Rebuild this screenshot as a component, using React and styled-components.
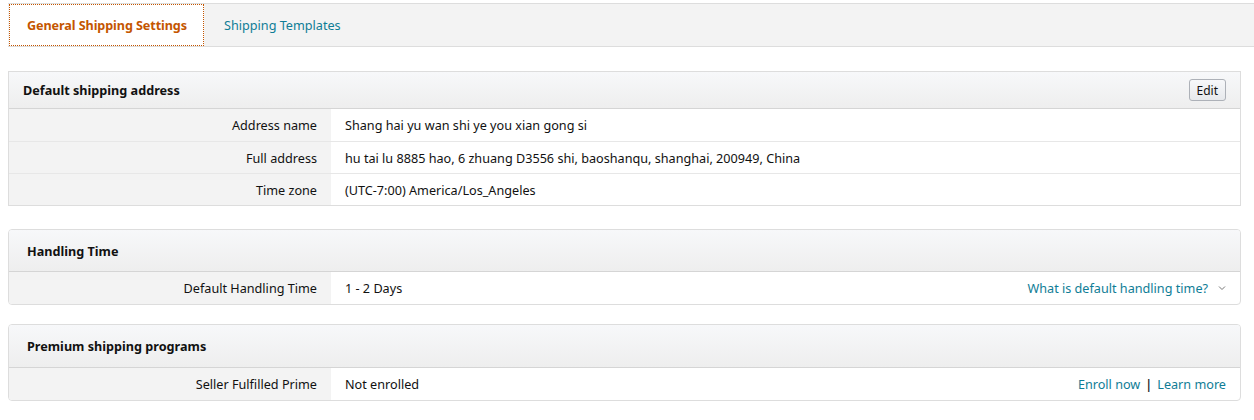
import React from "react";
import styled, { createGlobalStyle } from "styled-components";

const GlobalStyle = createGlobalStyle`
  body {
    margin: 0;
    padding: 3px 0 0 8px;
    background: #fff;
    font-family: "Noto Sans", "Open Sans", Arial, sans-serif;
    font-size: 12.65px;
    color: #111;
  }
`;

const Page = styled.div`
  display: flex;
  flex-direction: column;
`;

const TabBar = styled.nav`
  display: flex;
  height: 42px;
  background: #f3f3f3;
  border-top: 1px solid #ddd;
  border-bottom: 1px solid #ddd;
`;

const Tab = styled.a`
  display: flex;
  align-items: center;
  box-sizing: border-box;
  width: ${(p) => (p.$active ? "195px" : "auto")};
  padding: 0 20px 0 ${(p) => (p.$active ? "18px" : "20px")};
  font-size: 12.65px;
  font-weight: ${(p) => (p.$active ? 700 : 400)};
  letter-spacing: ${(p) => (p.$active ? "-0.1px" : "0")};
  white-space: nowrap;
  color: ${(p) => (p.$active ? "#c45500" : "#0f7d96")};
  background: ${(p) => (p.$active ? "#fff" : "transparent")};
  outline: ${(p) => (p.$active ? "1px dotted #c45500" : "none")};
  outline-offset: -1px;
  margin-left: ${(p) => (p.$active ? "1px" : "0")};
  cursor: pointer;
`;

const Panels = styled.div`
  display: flex;
  flex-direction: column;
  margin-top: 24px;
  width: 1233px;
`;

const Panel = styled.section`
  margin-top: ${(p) => p.$space || 0}px;
  border: 1px solid #ddd;
  border-radius: ${(p) => (p.$rounded ? "4px" : "0")};
  overflow: hidden;
  background: #fff;
`;

const PanelHeader = styled.header`
  display: flex;
  align-items: center;
  justify-content: space-between;
  height: ${(p) => p.$height}px;
  padding: 0 14px 0 ${(p) => p.$indent}px;
  background: linear-gradient(#f7f8fa, #eeeeee);
  border-bottom: 1px solid #d5d5d5;
  box-sizing: border-box;
`;

const PanelTitle = styled.h3`
  margin: 0;
  font-size: 12.65px;
  font-weight: 700;
  color: #111;
`;

const EditButton = styled.button`
  height: 22px;
  padding: 0 7px;
  font: inherit;
  font-size: 12px;
  color: #111;
  background: linear-gradient(#f7f8fa, #e7e9ec);
  border: 1px solid #adb1b8;
  border-radius: 3px;
  cursor: pointer;
`;

const Row = styled.div`
  display: grid;
  grid-template-columns: 322px 1fr;
  height: 32px;
  box-sizing: border-box;
  border-top: ${(p) => (p.$first ? "none" : "1px solid #e7e7e7")};
`;

const Label = styled.div`
  display: flex;
  align-items: center;
  justify-content: flex-end;
  padding-right: 14px;
  background: #f3f3f3;
  color: #111;
`;

const Value = styled.div`
  display: flex;
  align-items: center;
  justify-content: space-between;
  padding: 0 14px;
  color: #111;
`;

const Links = styled.div`
  display: flex;
  align-items: center;
  gap: 5px;
`;

const Link = styled.a`
  color: #0f7d96;
  cursor: pointer;
`;

const Divider = styled.span`
  color: #131a22;
  font-weight: 600;
`;

const Chevron = styled.svg`
  width: 8px;
  height: 6px;
  margin-left: 5px;
`;

const addressRows = [
  ["Address name", "Shang hai yu wan shi ye you xian gong si"],
  ["Full address", "hu tai lu 8885 hao, 6 zhuang D3556 shi, baoshanqu, shanghai, 200949, China"],
  ["Time zone", "(UTC-7:00) America/Los_Angeles"],
];

const App = () => {
  return (
    <Page>
      <GlobalStyle />
      <TabBar>
        <Tab $active>General Shipping Settings</Tab>
        <Tab>Shipping Templates</Tab>
      </TabBar>
      <Panels>
        <Panel>
          <PanelHeader $height={37} $indent={14}>
            <PanelTitle>Default shipping address</PanelTitle>
            <EditButton>Edit</EditButton>
          </PanelHeader>
          {addressRows.map(([label, value], i) => (
            <Row key={label} $first={i === 0}>
              <Label>{label}</Label>
              <Value>{value}</Value>
            </Row>
          ))}
        </Panel>
        <Panel $rounded $space={23}>
          <PanelHeader $height={42} $indent={18}>
            <PanelTitle>Handling Time</PanelTitle>
          </PanelHeader>
          <Row $first>
            <Label>Default Handling Time</Label>
            <Value>
              <span>1 - 2 Days</span>
              <Links>
                <Link>What is default handling time?</Link>
                <Chevron viewBox="0 0 8 6">
                  <path d="M1 1.5 L4 4.5 L7 1.5" fill="none" stroke="#777" strokeWidth="1" />
                </Chevron>
              </Links>
            </Value>
          </Row>
        </Panel>
        <Panel $rounded $space={19}>
          <PanelHeader $height={43} $indent={18}>
            <PanelTitle>Premium shipping programs</PanelTitle>
          </PanelHeader>
          <Row $first>
            <Label>Seller Fulfilled Prime</Label>
            <Value>
              <span>Not enrolled</span>
              <Links>
                <Link>Enroll now</Link>
                <Divider>|</Divider>
                <Link>Learn more</Link>
              </Links>
            </Value>
          </Row>
        </Panel>
      </Panels>
    </Page>
  );
};

export default App;
